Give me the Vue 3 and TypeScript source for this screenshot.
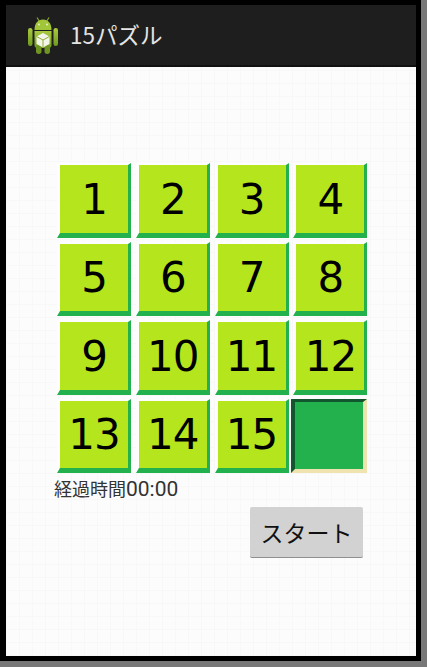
<script setup lang="ts">
const tiles: string[] = ['1','2','3','4','5','6','7','8','9','10','11','12','13','14','15','']
</script>

<template>
  <div class="device">
    <div class="frame">
      <div class="screen">
        <header class="bar">
          <svg class="logo" viewBox="0 0 30 37" aria-hidden="true">
            <defs>
              <linearGradient id="droid" x1="0" y1="0" x2="0" y2="1">
                <stop offset="0" stop-color="#aacb40" />
                <stop offset="1" stop-color="#6f9a1f" />
              </linearGradient>
            </defs>
            <path d="M9 0.500l2.500 4M21 0.500l-2.500 4" stroke="#87a52c" stroke-width="1.200" fill="none" />
            <path d="M6.500 13C6.500 6 10 2.500 15 2.500S23.500 6 23.500 13z" fill="#a2c63a" />
            <circle cx="11" cy="7.500" r="1" fill="#e6efc4" />
            <circle cx="19" cy="7.500" r="1" fill="#e6efc4" />
            <path d="M6.500 14h17v14a3 3 0 0 1-3 3h-11a3 3 0 0 1-3-3z" fill="url(#droid)" />
            <rect x="0" y="11" width="4.500" height="18" rx="2.200" fill="url(#droid)" />
            <rect x="25.500" y="11" width="4.500" height="18" rx="2.200" fill="url(#droid)" />
            <rect x="8" y="28" width="5.500" height="9" rx="2.700" fill="#6f9422" />
            <rect x="16.500" y="28" width="5.500" height="9" rx="2.700" fill="#6f9422" />
            <path d="M15 16l6.500 3.500v7.500L15 30.500 8.500 27v-7.500z" fill="#f4f5ea" />
            <path d="M8.500 19.500l6.500 3.500 6.500-3.500M15 23v7.500" stroke="#8fb02f" stroke-width="1" fill="none" />
          </svg>
          <span class="title">15パズル</span>
        </header>
        <main class="content">
          <div class="board">
            <div v-for="(t, i) in tiles" :key="i" class="tile" :class="{ blank: !t }"><span class="num">{{ t }}</span></div>
          </div>
          <div class="time">経過時間<span class="clock">00:00</span></div>
          <div class="actions"><button class="start" type="button">スタート</button></div>
        </main>
      </div>
    </div>
  </div>
</template>

<style scoped>
.device {
  width: 427px;
  height: 667px;
  box-sizing: border-box;
  background: #787878;
  padding: 0 6px 6px 0;
  overflow: hidden;
}
.frame {
  height: 100%;
  box-sizing: border-box;
  background: #000;
  padding: 5px 5px 5px 6px;
}
.screen {
  height: 100%;
  display: flex;
  flex-direction: column;
  background-color: #fcfcfc;
  background-image:
    linear-gradient(#f8f8f8 1px, transparent 1px),
    linear-gradient(90deg, #f8f8f8 1px, transparent 1px);
  background-size: 13px 13px;
}
.bar {
  height: 62px;
  flex: none;
  box-sizing: border-box;
  background: #1e1e1e;
  border-bottom: 2px solid #111;
  display: flex;
  align-items: center;
  padding: 0 0 3px 22px;
  gap: 12px;
}
.logo { width: 30px; height: 37px; flex: none; margin-top: 3px; }
.title {
  color: #e4e4e4;
  font: 22.500px "Noto Sans CJK JP", "Roboto", sans-serif;
}
.content {
  flex: 1;
  padding: 96px 0 0 51px;
}
.board {
  display: grid;
  grid-template-columns: repeat(4, 74px);
  grid-auto-rows: 74.500px;
  gap: 4px 4.800px;
}
.tile {
  box-sizing: border-box;
  display: flex;
  align-items: center;
  justify-content: center;
  background: #b5e61d;
  border-style: solid;
  border-width: 2px 3px 5px 3px;
  border-color: #fdfdfd #22b14c #22b14c #fdfdfd;
  color: #000;
  font: 42px "DejaVu Sans", sans-serif;
  line-height: 1;
  letter-spacing: -1px;
}
.num { position: relative; top: 1px; }
.tile.blank {
  margin-left: -2.500px;
  background: #22b14c;
  border-color: #11562c #efe4b0 #efe4b0 #11562c;
  border-width: 3px 4px 4px 4px;
}
.time {
  margin: 3px 0 0 -3px;
  color: #333;
  font: 18px/24px "Noto Sans CJK JP", sans-serif;
}
.clock {
  font: 21px/24px "Roboto", sans-serif;
}
.actions {
  display: flex;
  justify-content: flex-end;
  margin: 6px 53px 0 0;
}
.start {
  width: 113px;
  height: 51px;
  border: 0;
  border-bottom: 1px solid #8f8f8f;
  border-radius: 2px;
  background: #d2d2d2;
  color: #111;
  padding: 0;
  font: 23px "Noto Sans CJK JP", sans-serif;
}
</style>
